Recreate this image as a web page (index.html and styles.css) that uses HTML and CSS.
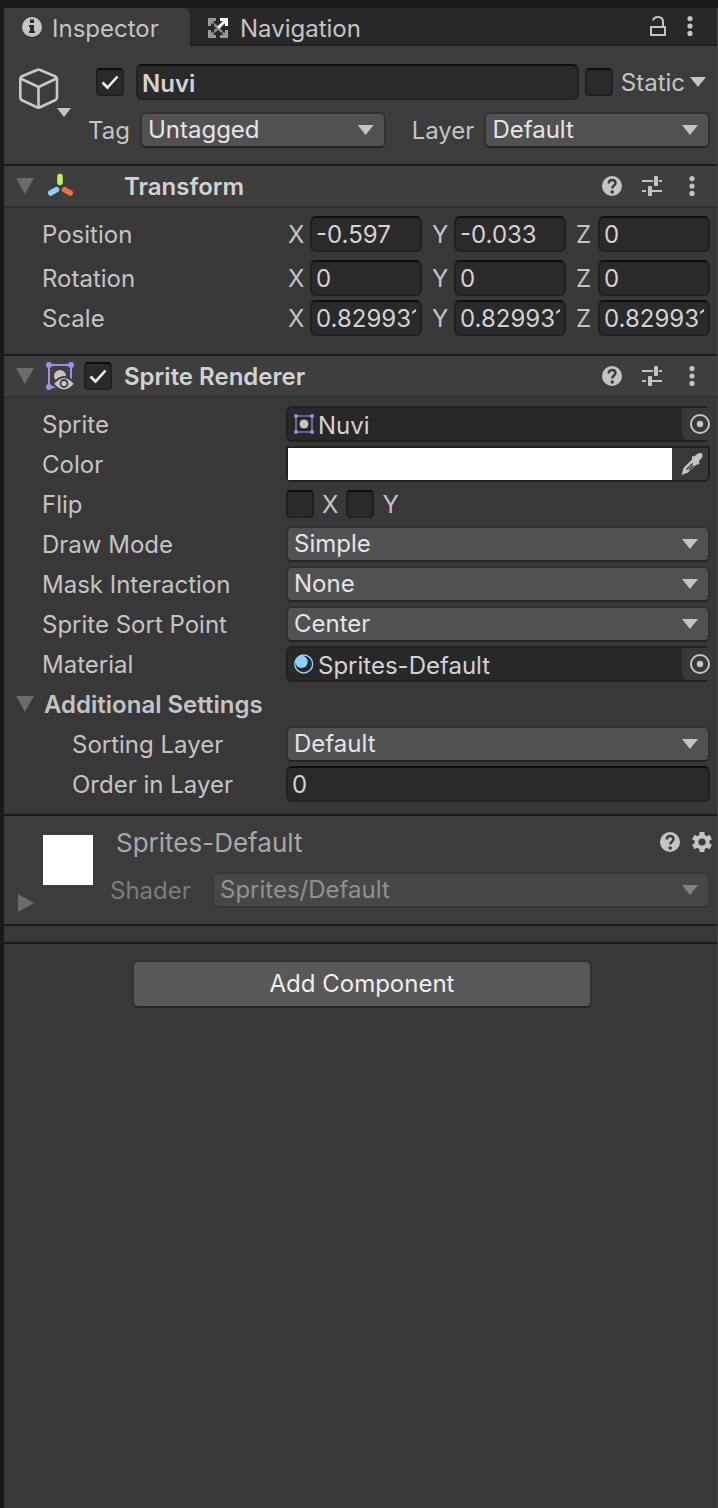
FILE: index.html
```html
<!DOCTYPE html>
<html lang="en">
<head>
<meta charset="utf-8">
<meta name="viewport" content="width=device-width, initial-scale=1">
<title>Inspector</title>
<link rel="stylesheet" href="styles.css">
</head>
<body>
<svg class="defs" aria-hidden="true">
  <symbol id="help" viewBox="0 0 20 20"><circle cx="10" cy="10" r="10" fill="#c4c4c4"/><path d="M6.700 7.600C6.700 5.200 8 4 10 4s3.500 1.300 3.500 3.100c0 2.300-3.300 2.600-3.300 5.400" fill="none" stroke="#3c3c3c" stroke-width="2.400"/><circle cx="10.200" cy="16" r="1.800" fill="#3c3c3c"/></symbol>
  <symbol id="sliders" viewBox="0 0 20 20"><path d="M0 5h11M17 5h3M0 15h4M10 15h10" stroke="#c4c4c4" stroke-width="2"/><rect x="12" y="0" width="4" height="10" rx="1" fill="#c4c4c4"/><rect x="6" y="10" width="4" height="10" rx="1" fill="#c4c4c4"/></symbol>
  <symbol id="dots" viewBox="0 0 20 20"><g fill="#c4c4c4"><circle cx="10" cy="2.600" r="2.600"/><circle cx="10" cy="10" r="2.600"/><circle cx="10" cy="17.400" r="2.600"/></g></symbol>
  <symbol id="target" viewBox="0 0 20 20"><circle cx="10" cy="10" r="9" fill="none" stroke="#c4c4c4" stroke-width="2"/><circle cx="10" cy="10" r="3.200" fill="#c4c4c4"/></symbol>
</svg>
<main class="panel">
  <nav class="tabs">
    <button class="tab active" type="button">
      <svg class="icon" viewBox="0 0 20 20"><circle cx="10" cy="10" r="10" fill="#c4c4c4"/><path d="M8 2.500h4v3.500H8zM7 8h5v6h1v2H7v-2h1v-4H7z" fill="#2c2c2c"/></svg>
      <span>Inspector</span>
    </button>
    <button class="tab" type="button">
      <svg class="icon" viewBox="0 0 20 20"><path d="M2 2l16 16M2 18l8-8" stroke="#8a8a8a" stroke-width="2.600" stroke-dasharray="5 1"/><path d="M1.500 8V1.500H8M1.500 12v6.500H8M12 18.500h6.500V12" fill="none" stroke="#9a9a9a" stroke-width="3"/><path d="M10 10l8-8M12 1.500h6.500V8" fill="none" stroke="#fff" stroke-width="3"/></svg>
      <span>Navigation</span>
    </button>
    <div class="tab-tools">
      <button class="icon-button" type="button" aria-label="Lock"><svg class="icon" viewBox="0 0 20 20"><path d="M3 11h14v8H3zM5 4.500Q6 1 10 1q5 0 5 5v5" fill="none" stroke="#c4c4c4" stroke-width="2"/></svg></button>
      <button class="icon-button" type="button" aria-label="Tab menu"><svg class="icon"><use href="#dots"/></svg></button>
    </div>
  </nav>

  <section class="object">
    <button class="object-icon" type="button" aria-label="Select icon">
      <svg class="cube" viewBox="0 0 52 50"><g fill="none" stroke="#c8c8c8" stroke-width="2.600" stroke-linejoin="round"><path d="M18.500 1.800Q19.500 1.300 20.500 1.800L36.500 8.500Q38 9.500 38 11V29.500Q38 31 36.500 32L20.500 39.500Q19.500 40 18.500 39.500L2.500 32Q1.300 31 1.300 29.500V11Q1.300 9.500 2.500 8.500Z"/><path d="M1.500 10.500l18 8.500 18-8.500M19.500 19v21"/></g><path d="M38 40h14l-7 9z" fill="#c4c4c4"/></svg>
    </button>
    <div class="object-fields">
      <div class="name-row">
        <input class="check" type="checkbox" checked aria-label="Active">
        <input class="field name" type="text" value="Nuvi" aria-label="Name">
        <input class="check" type="checkbox" id="static">
        <label class="static-label" for="static">Static</label>
        <button class="arrow-button" type="button" aria-label="Static options"></button>
      </div>
      <div class="tag-row">
        <label for="tag">Tag</label>
        <div class="select tag-select"><select id="tag"><option>Untagged</option></select></div>
        <label class="layer-label" for="layer">Layer</label>
        <div class="select layer-select"><select id="layer"><option>Default</option></select></div>
      </div>
    </div>
  </section>

  <section class="component">
    <header class="component-head">
      <button class="fold" type="button" aria-label="Collapse Transform"></button>
      <svg class="component-icon" viewBox="0 0 30 30"><g stroke-width="5.500" stroke-linecap="round"><path d="M14 5.500v6" stroke="#c0f560"/><path d="M10.500 18.700L4.700 22" stroke="#8cd2fb"/><path d="M18.500 18.700l5.800 3.300" stroke="#f07044"/></g></svg>
      <h2 class="title no-check">Transform</h2>
      <div class="tools">
        <button class="icon-button" type="button" aria-label="Help"><svg class="icon"><use href="#help"/></svg></button>
        <button class="icon-button" type="button" aria-label="Presets"><svg class="icon"><use href="#sliders"/></svg></button>
        <button class="icon-button" type="button" aria-label="Menu"><svg class="icon"><use href="#dots"/></svg></button>
      </div>
    </header>
    <div class="rows transform-rows">
      <div class="row spaced"><span class="label">Position</span>
        <div class="vector">
          <label class="axis"><span class="label">X</span><input class="field" type="text" value="-0.597"></label>
          <label class="axis"><span class="label">Y</span><input class="field" type="text" value="-0.033"></label>
          <label class="axis"><span class="label">Z</span><input class="field" type="text" value="0"></label>
        </div>
      </div>
      <div class="row"><span class="label">Rotation</span>
        <div class="vector">
          <label class="axis"><span class="label">X</span><input class="field" type="text" value="0"></label>
          <label class="axis"><span class="label">Y</span><input class="field" type="text" value="0"></label>
          <label class="axis"><span class="label">Z</span><input class="field" type="text" value="0"></label>
        </div>
      </div>
      <div class="row"><span class="label">Scale</span>
        <div class="vector">
          <label class="axis"><span class="label">X</span><input class="field" type="text" value="0.8299316"></label>
          <label class="axis"><span class="label">Y</span><input class="field" type="text" value="0.8299316"></label>
          <label class="axis"><span class="label">Z</span><input class="field" type="text" value="0.8299316"></label>
        </div>
      </div>
    </div>
  </section>

  <section class="component">
    <header class="component-head">
      <button class="fold" type="button" aria-label="Collapse Sprite Renderer"></button>
      <svg class="component-icon" viewBox="0 0 30 30"><path d="M3 27V4h22v14M3 26h6" fill="none" stroke="#a78bec" stroke-width="2"/><g fill="#a78bec"><circle cx="3" cy="4" r="3"/><circle cx="25" cy="4" r="3"/><circle cx="3" cy="26" r="3"/></g><circle cx="14" cy="15" r="6" fill="#c4c4c4"/><path d="M7 23q11-14 22 0-11 13-22 0z" fill="#c4c4c4" stroke="#3e3e3e" stroke-width="2"/><circle cx="18" cy="22.500" r="4.400" fill="#3e3e3e"/><circle cx="18" cy="22.500" r="2.600" fill="#c4c4c4"/></svg>
      <input class="check" type="checkbox" checked aria-label="Enable Sprite Renderer">
      <h2 class="title">Sprite Renderer</h2>
      <div class="tools">
        <button class="icon-button" type="button" aria-label="Help"><svg class="icon"><use href="#help"/></svg></button>
        <button class="icon-button" type="button" aria-label="Presets"><svg class="icon"><use href="#sliders"/></svg></button>
        <button class="icon-button" type="button" aria-label="Menu"><svg class="icon"><use href="#dots"/></svg></button>
      </div>
    </header>
    <div class="rows">
      <div class="row"><span class="label">Sprite</span>
        <div class="reference">
          <svg class="icon" viewBox="0 0 20 20"><path d="M2 2h16v16H2z" fill="none" stroke="#a78bec" stroke-width="1.200"/><g fill="#a78bec"><circle cx="2" cy="2" r="2"/><circle cx="18" cy="2" r="2"/><circle cx="2" cy="18" r="2"/><circle cx="18" cy="18" r="2"/></g><circle cx="10" cy="10" r="4.500" fill="#c4c4c4"/></svg>
          <span class="reference-name">Nuvi</span>
          <button class="picker" type="button" aria-label="Pick sprite"><svg class="icon"><use href="#target"/></svg></button>
        </div>
      </div>
      <div class="row"><label class="label" for="color">Color</label>
        <div class="color">
          <input class="swatch" type="color" id="color" value="#ffffff">
          <button class="dropper" type="button" aria-label="Pick color"><svg class="dropper-icon" viewBox="0 0 22 22"><path d="M11 3l2 .500L17 .500q2-1 4 0 1 2 0 4L18 8l.500 2.500L16 12l-5-5z" fill="#c4c4c4"/><path d="M11 6.500l5 4.500-9 8.500-6.500 2.500L2.500 15z" fill="#c4c4c4"/><path d="M5.500 16.500l6-6M8 17l4.500-4.500" stroke="#383838" stroke-width="1.400"/></svg></button>
        </div>
      </div>
      <div class="row"><span class="label">Flip</span>
        <div class="flip">
          <label><input class="check" type="checkbox"><span class="label">X</span></label>
          <label><input class="check" type="checkbox"><span class="label">Y</span></label>
        </div>
      </div>
      <div class="row"><label class="label" for="draw">Draw Mode</label><div class="select"><select id="draw"><option>Simple</option></select></div></div>
      <div class="row"><label class="label" for="mask">Mask Interaction</label><div class="select"><select id="mask"><option>None</option></select></div></div>
      <div class="row"><label class="label" for="sort">Sprite Sort Point</label><div class="select"><select id="sort"><option>Center</option></select></div></div>
      <div class="row"><span class="label">Material</span>
        <div class="reference">
          <svg class="icon" viewBox="0 0 20 20"><circle cx="9.700" cy="10" r="9" fill="none" stroke="#8cd2fb" stroke-width="1.400"/><circle cx="7.500" cy="7.800" r="6.200" fill="#8cd2fb"/></svg>
          <span class="reference-name">Sprites-Default</span>
          <button class="picker" type="button" aria-label="Pick material"><svg class="icon"><use href="#target"/></svg></button>
        </div>
      </div>
      <div class="subhead"><button class="fold" type="button" aria-label="Collapse Additional Settings"></button><h3 class="title">Additional Settings</h3></div>
      <div class="row"><label class="label nested" for="sorting">Sorting Layer</label><div class="select"><select id="sorting"><option>Default</option></select></div></div>
      <div class="row"><label class="label nested" for="order">Order in Layer</label><input class="field" id="order" type="text" value="0"></div>
    </div>
  </section>

  <section class="material">
    <div class="preview-column">
      <button class="fold closed" type="button" aria-label="Expand material"></button>
      <div class="preview"></div>
    </div>
    <div class="material-main">
      <div class="material-head">
        <h2 class="material-title">Sprites-Default</h2>
        <button class="icon-button" type="button" aria-label="Help"><svg class="icon"><use href="#help"/></svg></button>
        <button class="icon-button" type="button" aria-label="Settings"><svg class="icon" viewBox="0 0 20 20"><g stroke="#c4c4c4" stroke-width="5"><path d="M10 0v20M1.300 5l17.400 10M1.300 15L18.700 5"/></g><circle cx="10" cy="10" r="7.500" fill="#c4c4c4"/><circle cx="10" cy="10" r="3.600" fill="#3c3c3c"/></svg></button>
      </div>
      <div class="shader-row">
        <label class="label" for="shader">Shader</label>
        <div class="select disabled"><select id="shader" disabled><option>Sprites/Default</option></select></div>
      </div>
    </div>
  </section>
  <div class="divider"></div>
  <div class="add"><button class="add-button" type="button">Add Component</button></div>
</main>
</body>
</html>
```
FILE: styles.css
```css
* { box-sizing: border-box; }

body {
  margin: 0;
  background: #191919;
  color: #c4c4c4;
  font: 400 24px/32px Inter, "Liberation Sans", sans-serif;
}

button, input, select { font: inherit; color: inherit; margin: 0; }
button { padding: 0; border: 0; background: none; }
h2, h3 { margin: 0; font-size: 24px; }

.defs { position: absolute; width: 0; height: 0; }

.panel {
  min-height: calc(100vh - 8px);
  margin: 8px 0 0 4px;
  background: #383838;
  border-right: 1px solid #444;
}

.icon { display: block; flex: none; width: 20px; height: 20px; }
.icon-button { flex: none; }
.label { padding-top: 2px; }

/* Tabs */
.tabs {
  display: flex;
  height: 38px;
  background: #282828;
  border-bottom: 2px solid #202020;
}
.tab { display: flex; align-items: center; gap: 12px; height: 38px; padding: 2px 18px 0; }
.tab span { padding-top: 2px; }
.tab.active {
  gap: 10px;
  width: 186px;
  background: #3c3c3c;
  border-radius: 0 6px 0 0;
  box-shadow: 1px 0 #202020;
}
.tab.active .icon { margin-bottom: 2px; }
.tab-tools { display: flex; align-items: center; gap: 12px; margin-left: auto; padding-right: 17px; }

/* Controls */
.field {
  width: 100%;
  min-width: 0;
  height: 36px;
  padding: 0 4px;
  background: #2a2a2a;
  border: 2px solid #212121;
  border-top-color: #0d0d0d;
  border-radius: 6px;
  color: #d2d2d2;
}
.check {
  appearance: none;
  flex: none;
  width: 28px;
  height: 28px;
  background: #2a2a2a center / 24px 24px no-repeat;
  border: 2px solid #212121;
  border-top-color: #0d0d0d;
  border-radius: 4px;
}
.check:checked {
  background-image: url("data:image/svg+xml,%3Csvg xmlns='http://www.w3.org/2000/svg' viewBox='0 0 24 24'%3E%3Cpath d='M4.500 12.500l5 5L19.500 6.500' fill='none' stroke='%23eee' stroke-width='2.600'/%3E%3C/svg%3E");
}
.select { display: grid; align-items: center; min-width: 0; }
.select > select, .select::after { grid-area: 1 / 1; }
.select > select {
  appearance: none;
  width: 100%;
  height: 36px;
  padding: 0 32px 2px 6px;
  background: #515151;
  border: 2px solid #303030;
  border-bottom-color: #242424;
  border-radius: 6px;
  color: #e4e4e4;
}
.select::after, .arrow-button {
  content: "";
  width: 16px;
  height: 10px;
  background: #c4c4c4;
  clip-path: polygon(0 0, 100% 0, 50% 100%);
}
.select::after { justify-self: end; margin-right: 12px; pointer-events: none; }
.select.disabled > select {
  background: #474747;
  border-color: #393939;
  border-bottom-color: #333;
  color: #919191;
  opacity: 1;
}
.select.disabled::after { background: #828282; }
.fold {
  flex: none;
  width: 18px;
  height: 16px;
  background: #6b6b6b;
  clip-path: polygon(0 0, 100% 0, 50% 100%);
}
.fold.closed { width: 16px; height: 18px; clip-path: polygon(0 0, 100% 50%, 0 100%); }

/* Object header */
.object { display: flex; gap: 14px; padding: 18px 7px 16px 15px; background: #3c3c3c; }
.object-icon { align-self: flex-start; margin-top: 4px; }
.cube { display: block; width: 52px; height: 50px; }
.object-fields { flex: 1; min-width: 0; }
.name-row { display: flex; align-items: center; padding-left: 11px; }
.name { flex: 1; margin: 0 6px 0 12px; padding-top: 2px; font-weight: 600; }
.static-label { margin: 0 5px 0 8px; padding-top: 2px; }
.arrow-button { margin-right: 4px; }
.tag-row { display: flex; align-items: center; margin-top: 12px; padding-left: 3px; }
.tag-row label { padding-top: 2px; }
.tag-select { flex: 245; margin: 0 26px 0 10px; }
.layer-select { flex: 225; margin-left: 10px; }

/* Components */
.component-head {
  display: flex;
  align-items: center;
  height: 44px;
  padding: 0 15px 0 12px;
  background: #3e3e3e;
  border-top: 2px solid #1a1a1a;
  border-bottom: 2px solid #303030;
}
.component-icon { flex: none; width: 30px; height: 30px; margin: 0 8px 0 12px; }
.title { padding-top: 2px; font-weight: 600; }
.component-head .title { margin-left: 12px; color: #d2d2d2; }
.component-head .no-check { margin-left: 40px; }
.tools { display: flex; gap: 20px; margin-left: auto; }
.rows { display: grid; gap: 4px; padding: 8px 7px 12px 12px; }
.transform-rows { padding-bottom: 18px; }
.transform-rows .field { padding-top: 1px; }
.row { display: grid; grid-template-columns: 244px 1fr; align-items: center; height: 36px; padding-left: 26px; }
.row.spaced { margin-bottom: 4px; }
.nested { padding-left: 30px; }
.vector { display: grid; grid-template-columns: repeat(3, 1fr); gap: 10px; padding-left: 2px; }
.axis { display: grid; grid-template-columns: 22px 1fr; align-items: center; }
.reference {
  display: flex;
  align-items: center;
  height: 36px;
  padding-left: 6px;
  background: #282828;
  border: solid #202020;
  border-width: 2px 0 2px 2px;
  border-radius: 6px;
}
.reference-name { flex: 1; margin-left: 4px; padding-top: 4px; color: #d2d2d2; }
.picker { height: 32px; padding-left: 8px; background: #383838; border-radius: 0 0 0 6px; }
.color { display: flex; height: 36px; border: 2px solid #202020; border-radius: 0 0 6px 6px; }
.swatch { appearance: none; flex: 1; min-width: 0; height: 32px; padding: 0; border: 0; background: #fff; }
.swatch::-webkit-color-swatch-wrapper { padding: 0; }
.swatch::-webkit-color-swatch { border: 0; }
.dropper { display: grid; place-items: center; width: 36px; padding-left: 4px; }
.dropper-icon { display: block; width: 22px; height: 22px; }
.flip { display: flex; gap: 8px; }
.flip label { display: flex; align-items: center; gap: 8px; }
.subhead { display: flex; align-items: center; gap: 10px; height: 36px; }

/* Material */
.material {
  display: flex;
  background: #3c3c3c;
  border: solid #1a1a1a;
  border-width: 2px 0;
  height: 112px;
}
.preview-column { display: flex; gap: 9px; padding: 18px 17px 0 14px; }
.preview-column .fold { margin-top: 60px; }
.preview { width: 50px; height: 50px; margin-top: 1px; background: #fff; }
.material-main { flex: 1; min-width: 0; padding: 10px 7px 0 0; }
.material-head { display: flex; align-items: center; gap: 12px; height: 32px; margin: 0 -2px 0 6px; }
.material-title { flex: 1; padding-top: 2px; font-weight: 400; font-size: 26px; color: #a8a8a8; }
.shader-row { display: grid; grid-template-columns: 102px 1fr; align-items: center; margin-top: 14px; color: #7c7c7c; }

.divider { height: 18px; border-bottom: 2px solid #1a1a1a; }
.add { padding: 16px 125px 24px 128px; }
.add-button {
  width: 100%;
  height: 48px;
  background: #585858;
  border: 2px solid #303030;
  border-bottom-color: #242424;
  border-radius: 6px;
  color: #eee;
}
```
